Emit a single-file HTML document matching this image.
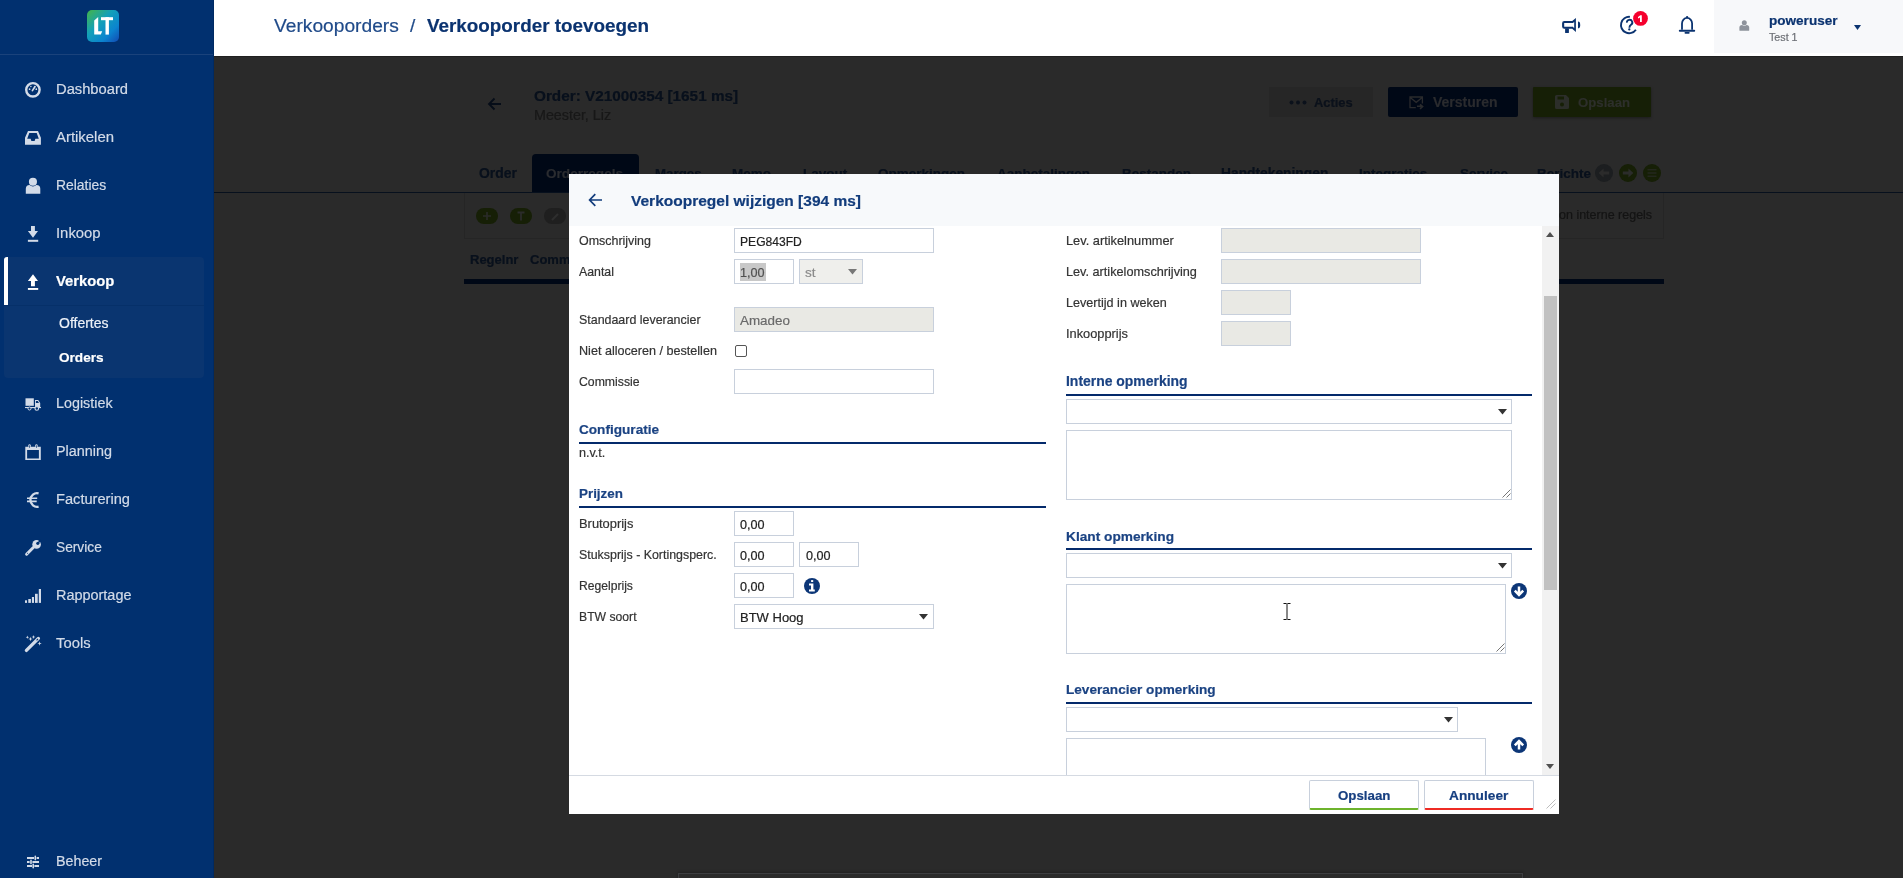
<!DOCTYPE html>
<html><head><meta charset="utf-8"><style>
*{box-sizing:border-box;margin:0;padding:0}
html,body{width:1903px;height:878px;overflow:hidden;font-family:"Liberation Sans",sans-serif;background:#2a2a2a;position:relative}
.t{will-change:transform;-webkit-text-stroke:0.2px currentColor}
.t{position:absolute;line-height:1;white-space:nowrap}
.r{position:absolute}
svg{position:absolute;overflow:visible}
</style></head><body>
<div class="r" style="left:214px;top:56px;width:1689px;height:822px;background:#2a2a2a"></div>
<div class="r" style="left:214px;top:56px;width:1689px;height:1px;background:#1f1f1f"></div>
<svg style="left:487px;top:97px" width="15" height="14" viewBox="0 0 15 14"><path d="M14 7H2M7.5 1.5L2 7l5.5 5.5" fill="none" stroke="#060d18" stroke-width="1.8"/></svg>
<div class="t " style="left:534px;top:88px;font-size:15.3px;color:#08101c;font-weight:bold;">Order: V21000354 [1651 ms]</div>
<div class="t " style="left:534px;top:108px;font-size:14.3px;color:#181818;font-weight:normal;">Meester, Liz</div>
<div class="r" style="left:1269px;top:87px;width:104px;height:30px;background:#262626"></div>
<svg style="left:1289px;top:100px" width="18" height="5"><circle cx="2.5" cy="2.5" r="2" fill="#0b111b"/><circle cx="9" cy="2.5" r="2" fill="#0b111b"/><circle cx="15.5" cy="2.5" r="2" fill="#0b111b"/></svg>
<div class="t " style="left:1314px;top:97px;font-size:12.9px;color:#0b111b;font-weight:bold;">Acties</div>
<div class="r" style="left:1388px;top:87px;width:130px;height:30px;background:#000816;border-radius:2px"></div>
<svg style="left:1409px;top:96px" width="16" height="14" viewBox="0 0 16 14"><path d="M13.4 7.5V1H1V11.6H6.8M1.2 1.6L7.2 6.3L13.2 1.6" fill="none" stroke="#2a2b2d" stroke-width="1.3"/><path d="M8 10.3H12.6M11 8.3L13.6 10.5L11 12.9" fill="none" stroke="#2a2b2d" stroke-width="1.6"/></svg>
<div class="t " style="left:1433px;top:95px;font-size:14px;color:#2a2b2e;font-weight:bold;">Versturen</div>
<div class="r" style="left:1533px;top:87px;width:118px;height:30px;background:#161f06;border-radius:1px;box-shadow:0 1px 3px rgba(0,0,0,.35)"></div>
<svg style="left:1555px;top:95px" width="14" height="14" viewBox="0 0 14 14"><path d="M0 1.5A1.5 1.5 0 0 1 1.5 0H11l3 3v9.5A1.5 1.5 0 0 1 12.5 14h-11A1.5 1.5 0 0 1 0 12.5z" fill="#2c2e2a"/><rect x="2.5" y="1.5" width="6.5" height="3" fill="#161f06"/><circle cx="7" cy="9.5" r="2" fill="#161f06"/></svg>
<div class="t " style="left:1578px;top:96px;font-size:13.2px;color:#2d2f2b;font-weight:bold;">Opslaan</div>
<div class="r" style="left:214px;top:192px;width:1689px;height:1px;background:#07101d"></div>
<div class="r" style="left:532px;top:154px;width:107px;height:38px;background:#000816;border-radius:4px 4px 0 0"></div>
<div class="t " style="left:479px;top:167px;font-size:13.9px;color:#08101c;font-weight:bold;">Order</div>
<div class="t " style="left:546px;top:167px;font-size:13.6px;color:#2a2c30;font-weight:bold;">Orderregels</div>
<div class="t " style="left:655px;top:167px;font-size:13.3px;color:#08101c;font-weight:bold;">Marges</div>
<div class="t " style="left:732px;top:167px;font-size:13.5px;color:#08101c;font-weight:bold;">Memo</div>
<div class="t " style="left:803px;top:167px;font-size:13.5px;color:#08101c;font-weight:bold;">Layout</div>
<div class="t " style="left:878px;top:167px;font-size:13.5px;color:#08101c;font-weight:bold;">Opmerkingen</div>
<div class="t " style="left:997px;top:167px;font-size:13.5px;color:#08101c;font-weight:bold;">Aanbetalingen</div>
<div class="t " style="left:1122px;top:167px;font-size:13.5px;color:#08101c;font-weight:bold;">Bestanden</div>
<div class="t " style="left:1221px;top:167px;font-size:13.8px;color:#08101c;font-weight:bold;">Handtekeningen</div>
<div class="t " style="left:1359px;top:167px;font-size:13.5px;color:#08101c;font-weight:bold;">Integraties</div>
<div class="t " style="left:1460px;top:167px;font-size:13.5px;color:#08101c;font-weight:bold;">Service</div>
<div class="t " style="left:1537px;top:167px;font-size:13.5px;color:#08101c;font-weight:bold;">Berichte</div>
<svg style="left:1595px;top:164px" width="18" height="18"><circle cx="9" cy="9" r="9" fill="#1c1e20"/><path d="M3.6 9L8.6 4.4V7.4H14.2V10.6H8.6V13.6Z" fill="#2b2b2b"/></svg>
<svg style="left:1619px;top:164px" width="18" height="18"><circle cx="9" cy="9" r="9" fill="#161f06"/><path d="M14.4 9L9.4 4.4V7.4H3.8V10.6H9.4V13.6Z" fill="#2b2c2a"/></svg>
<svg style="left:1643px;top:164px" width="18" height="18"><circle cx="9" cy="9" r="9" fill="#161f06"/><path d="M4.5 5.8h9M4.5 9h9M4.5 12.2h9" fill="none" stroke="#2b2c2a" stroke-width="1"/></svg>
<div class="r" style="left:464px;top:193px;width:1200px;height:46px;border:1px solid #252525;border-top:none"></div>
<svg style="left:476px;top:208px" width="22" height="16"><rect width="22" height="16" rx="8" fill="#161f06"/><path d="M11 4v8M7 8h8" stroke="#2b2c2a" stroke-width="1.6"/></svg>
<svg style="left:510px;top:208px" width="22" height="16"><rect width="22" height="16" rx="8" fill="#161f06"/><path d="M7.5 4.5h7M11 4.5v8" stroke="#2b2c2a" stroke-width="1.8"/></svg>
<svg style="left:544px;top:208px" width="22" height="16"><rect width="22" height="16" rx="8" fill="#1f1f1f"/><path d="M8 12l6-6" stroke="#2e2e2e" stroke-width="2.2"/></svg>
<div class="t " style="left:1559px;top:209px;font-size:12.5px;color:#141414;font-weight:normal;">on interne regels</div>
<div class="t " style="left:470px;top:253px;font-size:13px;color:#08101c;font-weight:bold;">Regelnr</div>
<div class="t " style="left:530px;top:253px;font-size:13px;color:#08101c;font-weight:bold;">Comm</div>
<div class="r" style="left:464px;top:279px;width:1200px;height:5px;background:#000816"></div>
<div class="r" style="left:678px;top:873px;width:845px;height:7px;border:1px solid #3d3e41;background:#2b2b2b;box-shadow:0 -1px 3px rgba(0,0,0,.25)"></div>
<div class="r" style="left:0px;top:0px;width:214px;height:878px;background:#01306f"></div>
<div class="r" style="left:0px;top:54px;width:214px;height:1px;background:#1a427b"></div>
<div class="r" style="left:213px;top:0px;width:1px;height:878px;background:#002a62"></div>
<svg style="left:87px;top:10px" width="32" height="32" viewBox="0 0 32 32"><defs><linearGradient id="lg" x1="0" y1="0" x2="1" y2="1"><stop offset="0" stop-color="#45b548"/><stop offset=".4" stop-color="#13a0b8"/><stop offset=".72" stop-color="#0b84cf"/><stop offset="1" stop-color="#1249b2"/></linearGradient></defs><rect width="32" height="32" rx="5" fill="url(#lg)"/><path d="M7.2 10.5L11.2 7V21.3H15.2L13.8 24.6H7.2Z" fill="#fff"/><rect x="14" y="7.2" width="12" height="3" fill="#fff"/><rect x="18.5" y="7.2" width="3.4" height="17.4" fill="#fff"/></svg>
<div class="r" style="left:4px;top:257px;width:200px;height:121px;background:#0a3570;border-radius:4px"></div>
<div class="r" style="left:4px;top:305px;width:200px;height:1px;background:#063069"></div>
<div class="r" style="left:4px;top:257px;width:4px;height:48px;background:#fff;border-radius:3px 0 0 0"></div>
<div class="t " style="left:56px;top:82px;font-size:14.72px;color:#d3dbe8;font-weight:normal;">Dashboard</div>
<div class="t " style="left:56px;top:130px;font-size:14.91px;color:#d3dbe8;font-weight:normal;">Artikelen</div>
<div class="t " style="left:56px;top:179px;font-size:13.92px;color:#d3dbe8;font-weight:normal;">Relaties</div>
<div class="t " style="left:56px;top:226px;font-size:14.85px;color:#d3dbe8;font-weight:normal;">Inkoop</div>
<div class="t " style="left:56px;top:396px;font-size:14.34px;color:#d3dbe8;font-weight:normal;">Logistiek</div>
<div class="t " style="left:56px;top:444px;font-size:14.39px;color:#d3dbe8;font-weight:normal;">Planning</div>
<div class="t " style="left:56px;top:492px;font-size:14.63px;color:#d3dbe8;font-weight:normal;">Facturering</div>
<div class="t " style="left:56px;top:541px;font-size:13.74px;color:#d3dbe8;font-weight:normal;">Service</div>
<div class="t " style="left:56px;top:588px;font-size:14.45px;color:#d3dbe8;font-weight:normal;">Rapportage</div>
<div class="t " style="left:56px;top:636px;font-size:14.82px;color:#d3dbe8;font-weight:normal;">Tools</div>
<div class="t " style="left:56px;top:854px;font-size:14.27px;color:#d3dbe8;font-weight:normal;">Beheer</div>
<div class="t " style="left:56px;top:274px;font-size:14.8px;color:#fff;font-weight:bold;">Verkoop</div>
<div class="t " style="left:59px;top:316px;font-size:14px;color:#eef2f8;font-weight:normal;">Offertes</div>
<div class="t " style="left:59px;top:351px;font-size:13.6px;color:#fff;font-weight:bold;">Orders</div>
<svg style="left:22px;top:78px" width="22" height="22" viewBox="0 0 22 22"><circle cx="10.9" cy="11.8" r="6.7" fill="none" stroke="#d3dbe8" stroke-width="2.4"/><path d="M10.4 12.6L12.9 8.8" stroke="#d3dbe8" stroke-width="1.7" stroke-linecap="round"/><circle cx="7.6" cy="11.2" r=".85" fill="#d3dbe8"/><circle cx="14.3" cy="11.2" r=".85" fill="#d3dbe8"/><circle cx="8.9" cy="8.5" r=".75" fill="#d3dbe8"/><circle cx="12.9" cy="8.4" r=".6" fill="#d3dbe8"/></svg>
<svg style="left:22px;top:126px" width="22" height="22" viewBox="0 0 22 22"><path fill-rule="evenodd" d="M6 5H16L18.9 11.8V18.8H3V11.8ZM7.3 7.1H14.7L16.8 12.8H13.4L12.6 15H9.4L8.6 12.8H5.2Z" fill="#d3dbe8"/></svg>
<svg style="left:22px;top:174px" width="22" height="22" viewBox="0 0 22 22"><path d="M3.8 19.8V14.8Q3.8 11 7.6 11H14.5Q18.3 11 18.3 14.8V19.8Z" fill="#d3dbe8"/><circle cx="10.95" cy="7.8" r="4.7" fill="#01306f"/><circle cx="10.95" cy="7.8" r="4.05" fill="#d3dbe8"/></svg>
<svg style="left:22px;top:222px" width="22" height="22" viewBox="0 0 22 22"><path d="M9 4H12.9V9H16L11 15.8L5.9 9H9Z" fill="#d3dbe8"/><rect x="5.9" y="17.8" width="10.3" height="2" fill="#d3dbe8"/></svg>
<svg style="left:22px;top:272px" width="22" height="22" viewBox="0 0 22 22"><path d="M11 2.3L16 8.9H12.9V14.3H9V8.9H5.9Z" fill="#fff"/><rect x="5.9" y="16" width="10.3" height="1.9" fill="#fff"/></svg>
<svg style="left:22px;top:393px" width="22" height="22" viewBox="0 0 22 22"><rect x="3.5" y="5.3" width="8.3" height="7.5" fill="#d3dbe8"/><path d="M13 7H16.2L18.2 10V14.2H13Z" fill="#d3dbe8"/><path d="M13.9 8H15.8L17 9.9H13.9Z" fill="#01306f"/><rect x="3" y="14" width="16" height="1.1" fill="#d3dbe8"/><circle cx="7.5" cy="15.5" r="1.5" fill="#01306f" stroke="#d3dbe8" stroke-width="1"/><circle cx="14.8" cy="15.4" r="1.8" fill="#01306f" stroke="#d3dbe8" stroke-width="1.1"/></svg>
<svg style="left:22px;top:441px" width="22" height="22" viewBox="0 0 22 22"><path fill-rule="evenodd" d="M3.3 5.8H18.8V19H3.3ZM5.1 9H16.9V17.4H5.1Z" fill="#d3dbe8"/><rect x="6.4" y="3.2" width="2.3" height="4.2" rx="1.15" fill="#d3dbe8"/><rect x="13.3" y="3.2" width="2.3" height="4.2" rx="1.15" fill="#d3dbe8"/><rect x="7.2" y="4.3" width=".7" height="2.5" fill="#01306f"/><rect x="14.1" y="4.3" width=".7" height="2.5" fill="#01306f"/></svg>
<svg style="left:22px;top:489px" width="22" height="22" viewBox="0 0 22 22"><path d="M16.6 4.4A6.6 6.8 0 1 0 16.6 17.6" fill="none" stroke="#d3dbe8" stroke-width="2.3"/><path d="M5 9.2H15.2M5 12.4H14.7" stroke="#d3dbe8" stroke-width="1.6"/></svg>
<svg style="left:22px;top:537px" width="22" height="22" viewBox="0 0 22 22"><path d="M4.6 17.2L11.3 10.5" stroke="#d3dbe8" stroke-width="3" stroke-linecap="round"/><circle cx="14.6" cy="7.4" r="4.3" fill="#d3dbe8"/><circle cx="15.8" cy="6.3" r="1.6" fill="#01306f"/><path d="M15.8 6.3L17.2 2.2L20 4.6Z" fill="#01306f"/><circle cx="5.6" cy="16.2" r=".55" fill="#01306f"/></svg>
<svg style="left:22px;top:585px" width="22" height="22" viewBox="0 0 22 22"><rect x="3" y="15.3" width="2" height="2.6" fill="#d3dbe8"/><rect x="6.3" y="14" width="2.6" height="3.9" fill="#d3dbe8"/><rect x="9.9" y="12" width="2.1" height="5.9" fill="#d3dbe8"/><rect x="13" y="8.8" width="2.7" height="9.1" fill="#d3dbe8"/><rect x="16.8" y="4" width="2.2" height="13.9" fill="#d3dbe8"/></svg>
<svg style="left:22px;top:633px" width="22" height="22" viewBox="0 0 22 22"><path d="M4.4 17.4L16.4 5.4" stroke="#d3dbe8" stroke-width="3.3" stroke-linecap="round"/><path d="M14.6 7.3L16 5.9" stroke="#01306f" stroke-width="1.1"/><path d="M5.4 2.5999999999999996Q5.4 4.3 7.1000000000000005 4.3Q5.4 4.3 5.4 6.0Q5.4 4.3 3.7 4.3Q5.4 4.3 5.4 2.5999999999999996ZM8.5 3.7Q8.5 6 10.8 6Q8.5 6 8.5 8.3Q8.5 6 6.2 6Q8.5 6 8.5 3.7ZM11.5 2Q11.5 4 13.5 4Q11.5 4 11.5 6Q11.5 4 9.5 4Q11.5 4 11.5 2ZM17.6 8.3Q17.6 10.5 19.8 10.5Q17.6 10.5 17.6 12.7Q17.6 10.5 15.400000000000002 10.5Q17.6 10.5 17.6 8.3Z" fill="#d3dbe8"/></svg>
<svg style="left:22px;top:851px" width="22" height="22" viewBox="0 0 22 22"><path d="M5 7H12M14.6 7H17M5 11H7.6M10.4 11H17M5 15H10M12.4 15H17" stroke="#d3dbe8" stroke-width="1.8"/><path d="M13.3 5.4V8.6M9 9.4V12.6M11.2 13.4V16.8" stroke="#d3dbe8" stroke-width="1.6" stroke-linecap="round"/></svg>
<div class="r" style="left:214px;top:0px;width:1689px;height:56px;background:#fff"></div>
<div class="r" style="left:1714px;top:0px;width:189px;height:53px;background:#f7f8fa"></div>
<div class="t " style="left:274px;top:16px;font-size:19.2px;color:#1f4a89;font-weight:normal;">Verkooporders</div>
<div class="t " style="left:410px;top:16px;font-size:19px;color:#1f4a89;font-weight:normal;">/</div>
<div class="t " style="left:427px;top:17px;font-size:18.85px;color:#0b3370;font-weight:bold;">Verkooporder toevoegen</div>
<svg style="left:1558px;top:14px" width="26" height="24" viewBox="0 0 26 24"><path fill-rule="evenodd" d="M4.1 9.2Q4.1 7 6.3 7H14.2L17.9 4V18L14.2 14.8H6.3Q4.1 14.8 4.1 12.6ZM6.2 9H14.9L16.2 7.9V14.3L14.9 12.8H6.2Z" fill="#0b3370"/><rect x="7.1" y="14.3" width="3.8" height="4.8" rx=".6" fill="#0b3370"/><path d="M20 7.6A2.2 3.3 0 0 1 20 14.3Z" fill="#0b3370"/></svg>
<svg style="left:1620px;top:16px" width="19" height="19" viewBox="0 0 19 19"><path d="M9.9 0.85A8.2 8.2 0 1 0 15.9 13.7" fill="none" stroke="#0b3370" stroke-width="1.9"/><path d="M6.9 6.6A2.7 2.7 0 1 1 11 8.8Q9.5 9.8 9.4 11.8" fill="none" stroke="#0b3370" stroke-width="1.9"/><circle cx="9.3" cy="13.4" r="1.15" fill="#0b3370"/></svg>
<svg style="left:1633px;top:11px" width="15" height="15" viewBox="0 0 15 15"><circle cx="7.5" cy="7.4" r="7.4" fill="#f5002d"/><path d="M5 6L7.3 4.3H8.8V10.9H7V6.5L5 7.6Z" fill="#fff"/></svg>
<svg style="left:1679px;top:16px" width="16" height="18" viewBox="0 0 16 18"><circle cx="8.1" cy="1.1" r="1.1" fill="#0b3370"/><path d="M3 13.8V7.6A5 5.6 0 0 1 13.1 7.6V13.8" fill="none" stroke="#0b3370" stroke-width="1.8"/><path d="M0.8 14.7H15.2" stroke="#0b3370" stroke-width="2" stroke-linecap="round"/><path d="M6.4 16.8H9.8" stroke="#0b3370" stroke-width="1.8" stroke-linecap="round"/></svg>
<svg style="left:1739px;top:20px" width="11" height="11" viewBox="0 0 11 11"><path d="M0.4 10.2V7.6Q0.4 5 3 5H7.6Q10.2 5 10.2 7.6V10.2Q10.2 10.8 9.6 10.8H1Q0.4 10.8 0.4 10.2Z" fill="#8d929b"/><circle cx="5.3" cy="2.7" r="3" fill="#f7f8fa"/><circle cx="5.3" cy="2.7" r="2.5" fill="#8d929b"/></svg>
<div class="t " style="left:1769px;top:14px;font-size:13.55px;color:#0b3370;font-weight:bold;">poweruser</div>
<div class="t " style="left:1769px;top:32px;font-size:10.7px;color:#6c6f75;font-weight:normal;">Test 1</div>
<svg style="left:1854px;top:25px" width="7" height="5"><path d="M0 0h7L3.5 5z" fill="#0b3370"/></svg>
<div class="r" style="left:569px;top:174px;width:990px;height:640px;background:#fff"></div>
<div class="r" style="left:569px;top:174px;width:990px;height:52px;background:#f7f9fb"></div>
<svg style="left:588px;top:193px" width="15" height="14" viewBox="0 0 15 14"><path d="M14 7H2M7.3 1.2L1.6 7 7.3 12.8" fill="none" stroke="#123c7c" stroke-width="1.7"/></svg>
<div class="t " style="left:631px;top:193px;font-size:15.5px;color:#123c7c;font-weight:bold;">Verkoopregel wijzigen [394 ms]</div>
<div class="t " style="left:579px;top:235px;font-size:12.46px;color:#333;font-weight:normal;">Omschrijving</div>
<div class="r" style="left:734px;top:228px;width:200px;height:25px;background:#fff;border:1px solid #c8d0dc"></div>
<div class="t " style="left:740px;top:236px;font-size:12.1px;color:#222;font-weight:normal;">PEG843FD</div>
<div class="t " style="left:579px;top:266px;font-size:12.3px;color:#333;font-weight:normal;">Aantal</div>
<div class="r" style="left:734px;top:259px;width:60px;height:25px;background:#fff;border:1px solid #c8d0dc"></div>
<div class="r" style="left:740px;top:263px;width:26px;height:18px;background:#c8c8c8"></div>
<div class="t " style="left:740px;top:267px;font-size:12.64px;color:#505050;font-weight:normal;">1,00</div>
<div class="r" style="left:799px;top:259px;width:64px;height:25px;background:#efefec;border:1px solid #c8d0dc"></div>
<div class="t " style="left:805px;top:266px;font-size:13.5px;color:#8a8a8a;font-weight:normal;">st</div>
<svg style="left:848px;top:269px" width="9" height="6"><path d="M0 0h9L4.5 5.5z" fill="#777"/></svg>
<div class="t " style="left:579px;top:314px;font-size:12.43px;color:#333;font-weight:normal;">Standaard leverancier</div>
<div class="r" style="left:734px;top:307px;width:200px;height:25px;background:#e9e9e4;border:1px solid #c8d0dc"></div>
<div class="t " style="left:740px;top:314px;font-size:13.4px;color:#6a6a6a;font-weight:normal;">Amadeo</div>
<div class="t " style="left:579px;top:345px;font-size:12.6px;color:#333;font-weight:normal;">Niet alloceren / bestellen</div>
<div class="r" style="left:734.5px;top:344.5px;width:12.5px;height:12.5px;border:1px solid #555;border-radius:2px;background:#fff"></div>
<div class="t " style="left:579px;top:376px;font-size:12.26px;color:#333;font-weight:normal;">Commissie</div>
<div class="r" style="left:734px;top:369px;width:200px;height:25px;background:#fff;border:1px solid #c8d0dc"></div>
<div class="t " style="left:579px;top:423px;font-size:13.6px;color:#1b4383;font-weight:bold;">Configuratie</div>
<div class="r" style="left:579px;top:442px;width:467px;height:2px;background:#042a6b"></div>
<div class="t " style="left:579px;top:447px;font-size:12.6px;color:#333;font-weight:normal;">n.v.t.</div>
<div class="t " style="left:579px;top:487px;font-size:13.4px;color:#1b4383;font-weight:bold;">Prijzen</div>
<div class="r" style="left:579px;top:506px;width:467px;height:2px;background:#042a6b"></div>
<div class="t " style="left:579px;top:518px;font-size:12.88px;color:#333;font-weight:normal;">Brutoprijs</div>
<div class="r" style="left:734px;top:511px;width:60px;height:25px;background:#fff;border:1px solid #c8d0dc"></div>
<div class="t " style="left:740px;top:519px;font-size:12.6px;color:#222;font-weight:normal;">0,00</div>
<div class="t " style="left:579px;top:549px;font-size:12.4px;color:#333;font-weight:normal;">Stuksprijs - Kortingsperc.</div>
<div class="r" style="left:734px;top:542px;width:60px;height:25px;background:#fff;border:1px solid #c8d0dc"></div>
<div class="t " style="left:740px;top:550px;font-size:12.6px;color:#222;font-weight:normal;">0,00</div>
<div class="r" style="left:799px;top:542px;width:60px;height:25px;background:#fff;border:1px solid #c8d0dc"></div>
<div class="t " style="left:806px;top:550px;font-size:12.6px;color:#222;font-weight:normal;">0,00</div>
<div class="t " style="left:579px;top:580px;font-size:12.14px;color:#333;font-weight:normal;">Regelprijs</div>
<div class="r" style="left:734px;top:573px;width:60px;height:25px;background:#fff;border:1px solid #c8d0dc"></div>
<div class="t " style="left:740px;top:581px;font-size:12.6px;color:#222;font-weight:normal;">0,00</div>
<svg style="left:804px;top:578px" width="16" height="16" viewBox="0 0 16 16"><circle cx="8" cy="8" r="8" fill="#0c3677"/><rect x="7.1" y="2.1" width="2.1" height="1.9" fill="#fff"/><path d="M5 5.5H9.4V11.5H10.8V13.4H5V11.5H7V7.4H5Z" fill="#fff"/></svg>
<div class="t " style="left:579px;top:611px;font-size:12.2px;color:#333;font-weight:normal;">BTW soort</div>
<div class="r" style="left:734px;top:604px;width:200px;height:25px;background:#fff;border:1px solid #c8d0dc"></div>
<div class="t " style="left:740px;top:611px;font-size:13px;color:#222;font-weight:normal;">BTW Hoog</div>
<svg style="left:919px;top:614px" width="9" height="6"><path d="M0 0h9L4.5 5.5z" fill="#333"/></svg>
<div class="t " style="left:1066px;top:235px;font-size:12.8px;color:#333;font-weight:normal;">Lev. artikelnummer</div>
<div class="r" style="left:1221px;top:228px;width:200px;height:25px;background:#e9e9e4;border:1px solid #c8d0dc"></div>
<div class="t " style="left:1066px;top:266px;font-size:12.7px;color:#333;font-weight:normal;">Lev. artikelomschrijving</div>
<div class="r" style="left:1221px;top:259px;width:200px;height:25px;background:#e9e9e4;border:1px solid #c8d0dc"></div>
<div class="t " style="left:1066px;top:297px;font-size:12.6px;color:#333;font-weight:normal;">Levertijd in weken</div>
<div class="r" style="left:1221px;top:290px;width:70px;height:25px;background:#e9e9e4;border:1px solid #c8d0dc"></div>
<div class="t " style="left:1066px;top:328px;font-size:12.8px;color:#333;font-weight:normal;">Inkoopprijs</div>
<div class="r" style="left:1221px;top:321px;width:70px;height:25px;background:#e9e9e4;border:1px solid #c8d0dc"></div>
<div class="t " style="left:1066px;top:375px;font-size:13.94px;color:#1b4383;font-weight:bold;">Interne opmerking</div>
<div class="r" style="left:1066px;top:394px;width:466px;height:2px;background:#042a6b"></div>
<div class="r" style="left:1066px;top:399px;width:446px;height:25px;background:#fff;border:1px solid #c8d0dc"></div>
<svg style="left:1498px;top:409px" width="9" height="6"><path d="M0 0h9L4.5 5.5z" fill="#333"/></svg>
<div class="r" style="left:1066px;top:430px;width:446px;height:70px;background:#fff;border:1px solid #c8d0dc"></div>
<svg style="left:1502px;top:489px" width="9" height="9"><path d="M8.5 0.5L0.5 8.5M8.5 4.5L4.5 8.5" stroke="#777" stroke-width="1"/></svg>
<div class="t " style="left:1066px;top:530px;font-size:13.69px;color:#1b4383;font-weight:bold;">Klant opmerking</div>
<div class="r" style="left:1066px;top:548px;width:466px;height:2px;background:#042a6b"></div>
<div class="r" style="left:1066px;top:553px;width:446px;height:25px;background:#fff;border:1px solid #c8d0dc"></div>
<svg style="left:1498px;top:563px" width="9" height="6"><path d="M0 0h9L4.5 5.5z" fill="#333"/></svg>
<div class="r" style="left:1066px;top:584px;width:440px;height:70px;background:#fff;border:1px solid #c8d0dc"></div>
<svg style="left:1496px;top:643px" width="9" height="9"><path d="M8.5 0.5L0.5 8.5M8.5 4.5L4.5 8.5" stroke="#777" stroke-width="1"/></svg>
<svg style="left:1511px;top:583px" width="16" height="16" viewBox="0 0 16 16"><circle cx="8" cy="8" r="8" fill="#0c3677"/><path d="M8 3.6V11.5M3.8 7.7L8 11.9L12.2 7.7" fill="none" stroke="#fff" stroke-width="2.5"/></svg>
<svg style="left:1283px;top:603px" width="8" height="17" viewBox="0 0 8 17"><path d="M0.5 0.5h3M4.5 0.5h3M4 0.5v16M0.5 16.5h3M4.5 16.5h3" stroke="#111" stroke-width="1" fill="none"/></svg>
<div class="t " style="left:1066px;top:683px;font-size:13.6px;color:#1b4383;font-weight:bold;">Leverancier opmerking</div>
<div class="r" style="left:1066px;top:702px;width:466px;height:2px;background:#042a6b"></div>
<div class="r" style="left:1066px;top:707px;width:392px;height:25px;background:#fff;border:1px solid #c8d0dc"></div>
<svg style="left:1444px;top:717px" width="9" height="6"><path d="M0 0h9L4.5 5.5z" fill="#333"/></svg>
<div class="r" style="left:1066px;top:738px;width:420px;height:52px;background:#fff;border:1px solid #c8d0dc"></div>
<svg style="left:1511px;top:737px" width="16" height="16" viewBox="0 0 16 16"><circle cx="8" cy="8" r="8" fill="#0c3677"/><path d="M8 12.4V4.5M3.8 8.3L8 4.1L12.2 8.3" fill="none" stroke="#fff" stroke-width="2.5"/></svg>
<div class="r" style="left:1542px;top:226px;width:17px;height:549px;background:#f1f1f1"></div>
<div class="r" style="left:1544px;top:296px;width:13px;height:294px;background:#c1c1c1"></div>
<svg style="left:1546px;top:232px" width="8" height="5"><path d="M0 5h8L4 0z" fill="#505050"/></svg>
<svg style="left:1546px;top:764px" width="8" height="5"><path d="M0 0h8L4 5z" fill="#505050"/></svg>
<div class="r" style="left:569px;top:775px;width:990px;height:39px;background:#fff"></div>
<div class="r" style="left:569px;top:775px;width:990px;height:1px;background:#d5dae2"></div>
<div class="r" style="left:1309px;top:780px;width:110px;height:30px;background:#fff;border:1px solid #c8d0dc;border-bottom:2px solid #6db32c;border-radius:2px"></div>
<div class="t " style="left:1338px;top:789px;font-size:13.3px;color:#173f80;font-weight:bold;">Opslaan</div>
<div class="r" style="left:1424px;top:780px;width:110px;height:30px;background:#fff;border:1px solid #c8d0dc;border-bottom:2px solid #ee2b24;border-radius:2px"></div>
<div class="t " style="left:1449px;top:789px;font-size:13.7px;color:#173f80;font-weight:bold;">Annuleer</div>
<svg style="left:1546px;top:799px" width="10" height="10"><path d="M9.5 0.5L0.5 9.5M9.5 4.5L4.5 9.5" stroke="#bdbdbd" stroke-width="1"/></svg>
</body></html>
